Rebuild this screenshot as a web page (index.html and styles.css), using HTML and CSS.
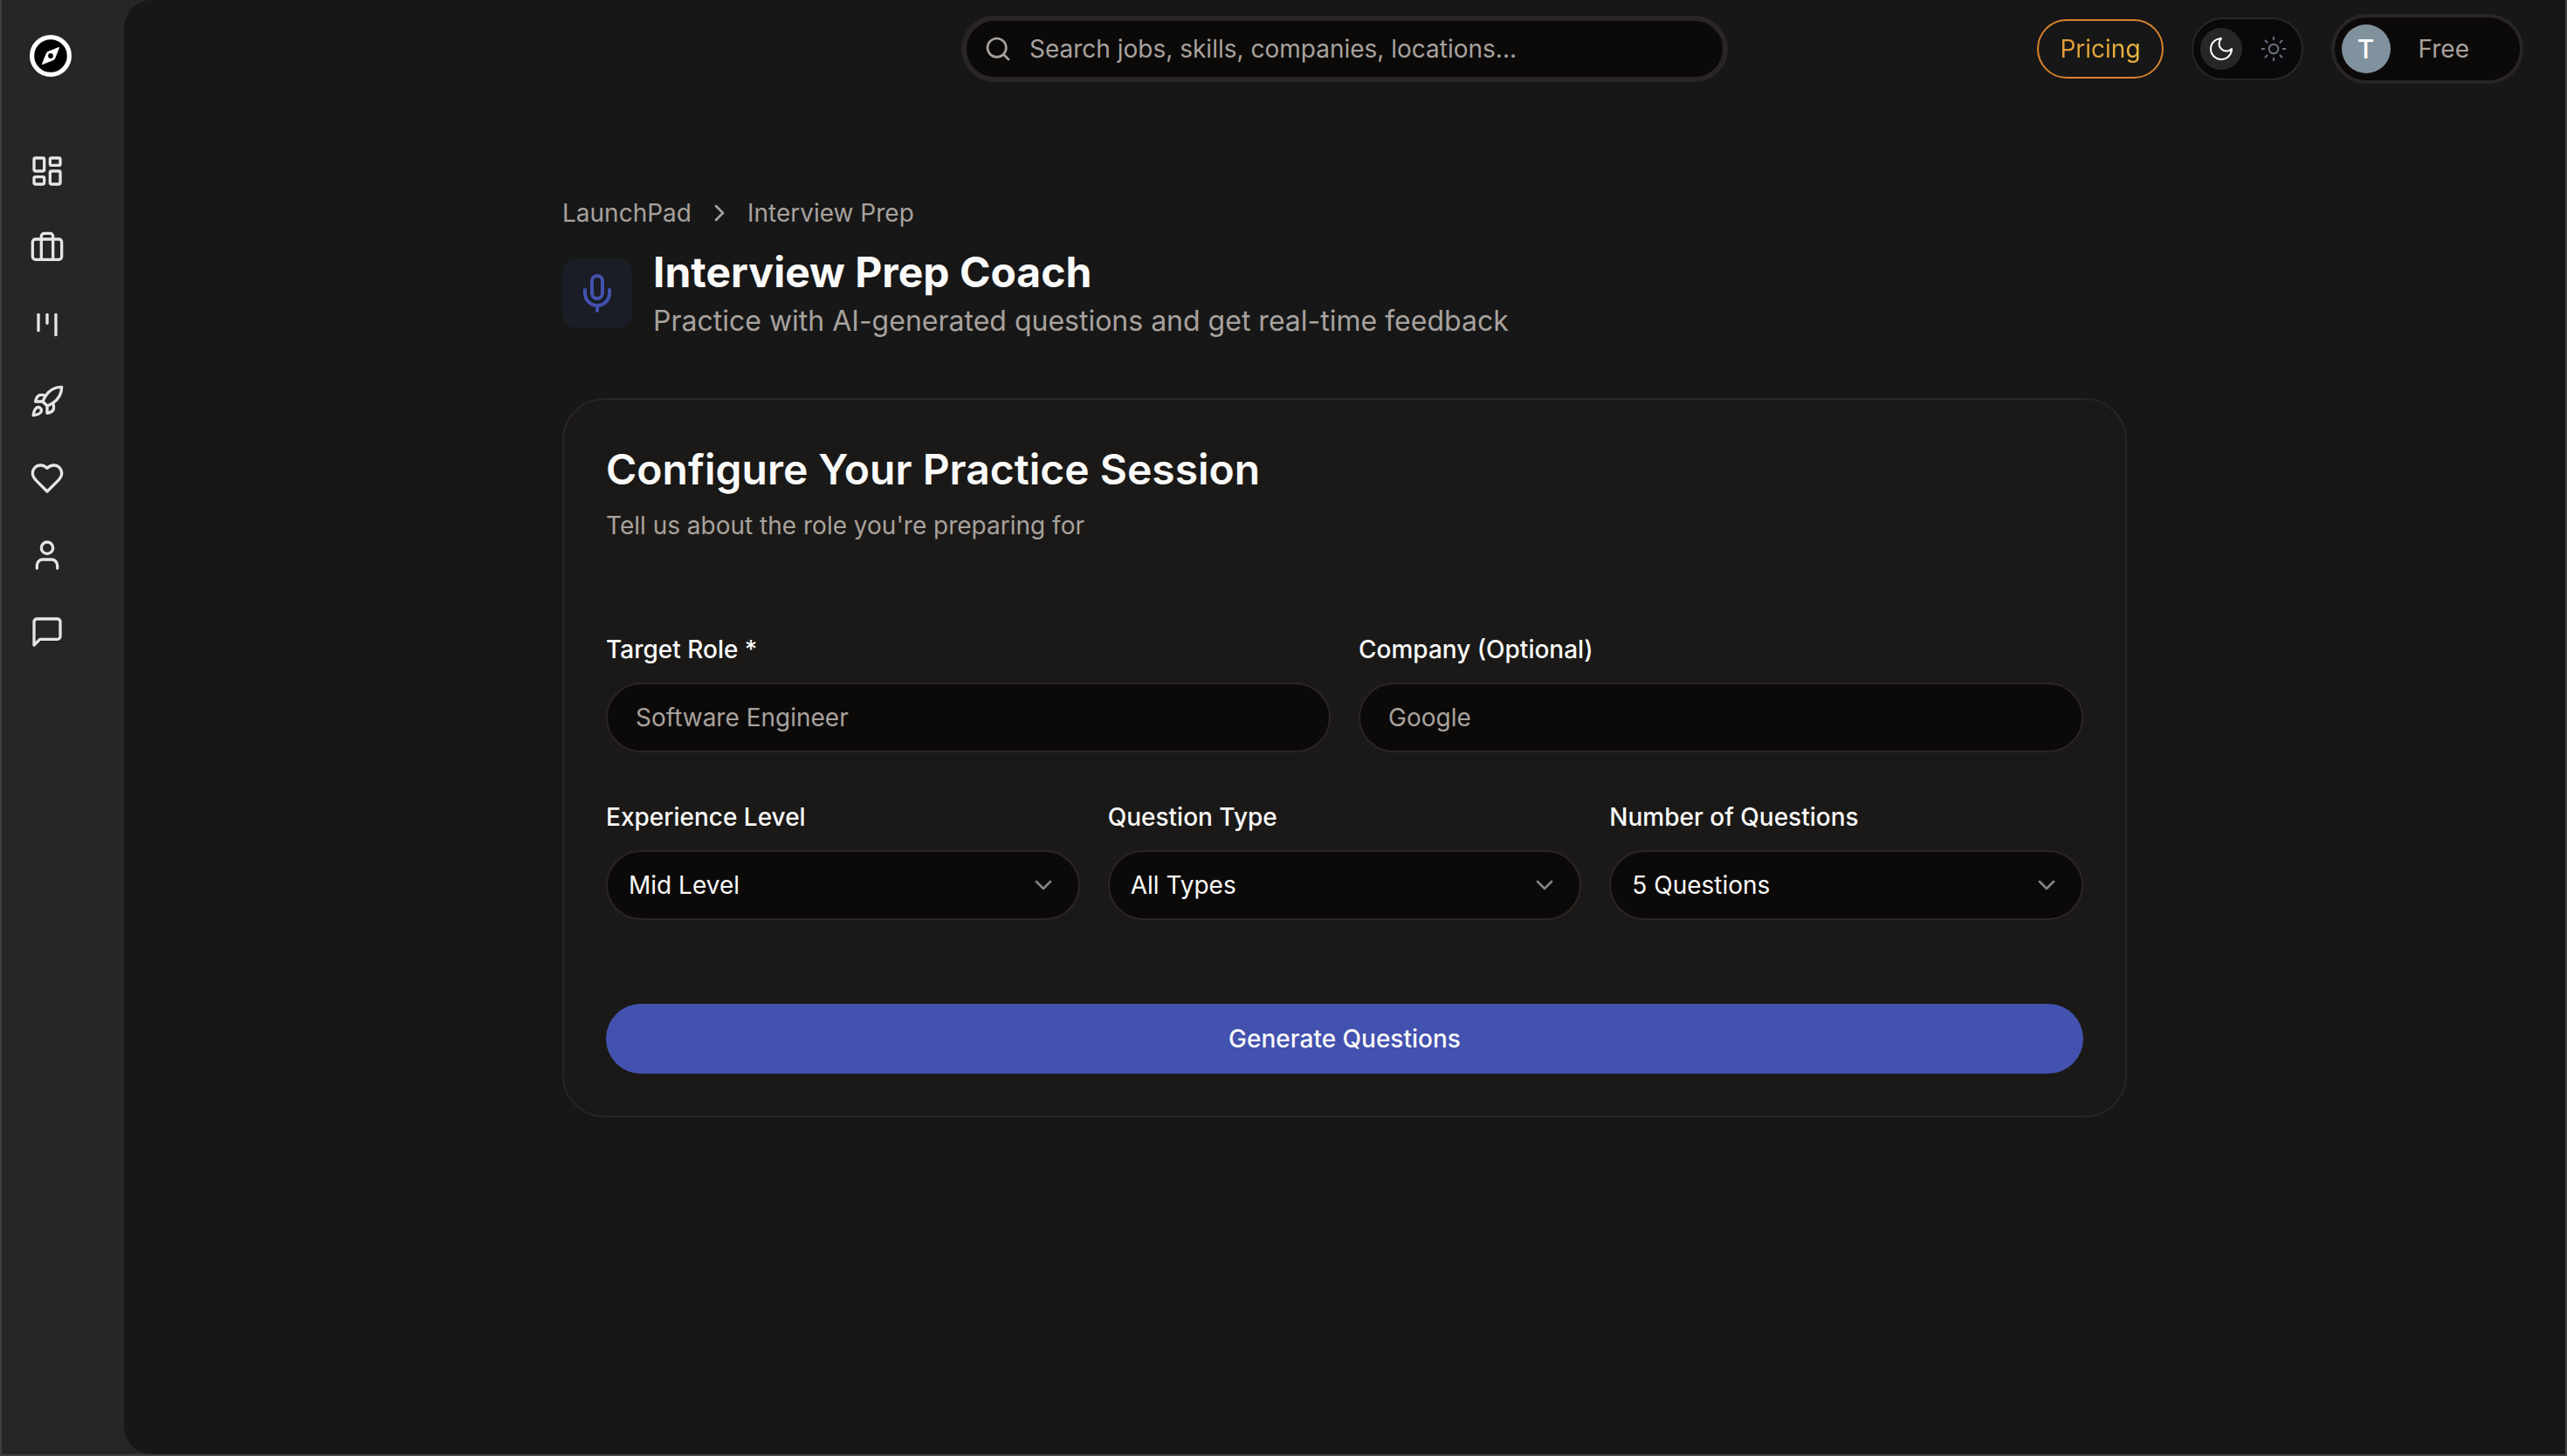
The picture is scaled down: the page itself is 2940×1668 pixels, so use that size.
FILE: index.html
```html
<!DOCTYPE html>
<html lang="en">
<head>
<meta charset="utf-8">
<meta name="viewport" content="width=device-width, initial-scale=1">
<title>Interview Prep Coach</title>
<link rel="stylesheet" href="styles.css">
</head>
<body>
<div class="app">
  <nav class="sidebar" aria-label="Main">
    <a class="logo" href="#" aria-label="Home">
      <svg viewBox="0 0 48 48"><circle cx="24" cy="24" r="21.4" fill="#000" stroke="#fff" stroke-width="5.2"/><path d="M33.6 14.4 28.6 27a3 3 0 0 1-1.6 1.6L14.4 33.6 19.4 21a3 3 0 0 1 1.6-1.6Z" fill="#fff" stroke="#fff" stroke-linejoin="round"/><circle cx="24" cy="24" r="2.9" fill="#000"/></svg>
    </a>
    <ul class="nav-list">
      <li><a href="#" aria-label="Dashboard"><svg class="icon" viewBox="0 0 24 24"><rect width="7" height="9" x="3" y="3" rx="1"/><rect width="7" height="5" x="14" y="3" rx="1"/><rect width="7" height="9" x="14" y="12" rx="1"/><rect width="7" height="5" x="3" y="16" rx="1"/></svg></a></li>
      <li><a href="#" aria-label="Jobs"><svg class="icon" viewBox="0 0 24 24"><path d="M16 20V4a2 2 0 0 0-2-2h-4a2 2 0 0 0-2 2v16"/><rect width="20" height="14" x="2" y="6" rx="2"/></svg></a></li>
      <li><a href="#" aria-label="Tracker"><svg class="icon" viewBox="0 0 24 24"><path d="M6 5v11"/><path d="M12 5v6"/><path d="M18 5v14"/></svg></a></li>
      <li><a href="#" aria-label="LaunchPad"><svg class="icon" viewBox="0 0 24 24"><path d="M4.5 16.5c-1.5 1.26-2 5-2 5s3.74-.5 5-2c.71-.84.7-2.13-.09-2.91a2.18 2.18 0 0 0-2.91-.09z"/><path d="m12 15-3-3a22 22 0 0 1 2-3.95A12.88 12.88 0 0 1 22 2c0 2.72-.78 7.5-6 11a22.35 22.35 0 0 1-4 2z"/><path d="M9 12H4s.55-3.03 2-4c1.62-1.08 5 0 5 0"/><path d="M12 15v5s3.03-.55 4-2c1.08-1.62 0-5 0-5"/></svg></a></li>
      <li><a href="#" aria-label="Favorites"><svg class="icon" viewBox="0 0 24 24"><path d="M19 14c1.49-1.46 3-3.21 3-5.5A5.5 5.5 0 0 0 16.5 3c-1.76 0-3 .5-4.5 2-1.5-1.5-2.74-2-4.5-2A5.5 5.5 0 0 0 2 8.5c0 2.3 1.5 4.05 3 5.5l7 7Z"/></svg></a></li>
      <li><a href="#" aria-label="Profile"><svg class="icon" viewBox="0 0 24 24"><path d="M19 21v-2a4 4 0 0 0-4-4H9a4 4 0 0 0-4 4v2"/><circle cx="12" cy="7" r="4"/></svg></a></li>
      <li><a href="#" aria-label="Messages"><svg class="icon" viewBox="0 0 24 24"><path d="M21 15a2 2 0 0 1-2 2H7l-4 4V5a2 2 0 0 1 2-2h14a2 2 0 0 1 2 2z"/></svg></a></li>
    </ul>
  </nav>

  <div class="main">
    <header class="topbar">
      <label class="search">
        <svg class="icon icon-sm" viewBox="0 0 24 24" aria-hidden="true"><circle cx="11" cy="11" r="8"/><path d="m21 21-4.3-4.3"/></svg>
        <input type="search" aria-label="Search" placeholder="Search jobs, skills, companies, locations...">
      </label>
      <div class="actions">
        <a class="pricing" href="#"><span>Pricing</span></a>
        <button class="theme" type="button" aria-label="Toggle theme">
          <span class="theme-option theme-active"><svg class="icon icon-sm" viewBox="0 0 24 24"><path d="M12 3a6 6 0 0 0 9 9 9 9 0 1 1-9-9Z"/></svg></span>
          <span class="theme-option"><svg class="icon icon-sm" viewBox="0 0 24 24"><circle cx="12" cy="12" r="4"/><path d="M12 2v2M12 20v2m-7.07-17.07 1.41 1.41M17.66 17.66l1.41 1.41M2 12h2M20 12h2M6.34 17.66l-1.41 1.41M19.07 4.93l-1.41 1.41"/></svg></span>
        </button>
        <button class="account" type="button"><span class="avatar">T</span><span class="plan">Free</span></button>
      </div>
    </header>

    <main class="content">
      <nav class="breadcrumb" aria-label="Breadcrumb">
        <a href="#">LaunchPad</a>
        <svg class="icon icon-sm" viewBox="0 0 24 24" aria-hidden="true"><path d="m9 18 6-6-6-6"/></svg>
        <span>Interview Prep</span>
      </nav>
      <div class="page-head">
        <div class="page-icon"><svg class="icon" viewBox="0 0 24 24"><path d="M12 19v3"/><path d="M19 10v2a7 7 0 0 1-14 0v-2"/><rect x="9" y="2" width="6" height="13" rx="3"/></svg></div>
        <div>
          <h1>Interview Prep Coach</h1>
          <p>Practice with AI-generated questions and get real-time feedback</p>
        </div>
      </div>

      <form class="card">
        <div class="card-head">
          <h2>Configure Your Practice Session</h2>
          <p>Tell us about the role you're preparing for</p>
        </div>
        <div class="fields">
          <div class="row row-2">
            <div class="field">
              <label for="role">Target Role *</label>
              <input class="control" id="role" type="text" placeholder="Software Engineer">
            </div>
            <div class="field">
              <label for="company">Company (Optional)</label>
              <input class="control" id="company" type="text" placeholder="Google">
            </div>
          </div>
          <div class="row row-3">
            <div class="field">
              <label for="level">Experience Level</label>
              <div class="select">
                <select class="control" id="level"><option>Mid Level</option></select>
                <svg class="icon icon-sm" viewBox="0 0 24 24" aria-hidden="true"><path d="m6 9 6 6 6-6"/></svg>
              </div>
            </div>
            <div class="field">
              <label for="type">Question Type</label>
              <div class="select">
                <select class="control" id="type"><option>All Types</option></select>
                <svg class="icon icon-sm" viewBox="0 0 24 24" aria-hidden="true"><path d="m6 9 6 6 6-6"/></svg>
              </div>
            </div>
            <div class="field">
              <label for="count">Number of Questions</label>
              <div class="select">
                <select class="control" id="count"><option>5 Questions</option></select>
                <svg class="icon icon-sm" viewBox="0 0 24 24" aria-hidden="true"><path d="m6 9 6 6 6-6"/></svg>
              </div>
            </div>
          </div>
        </div>
        <button class="submit" type="submit">Generate Questions</button>
      </form>
    </main>
  </div>
</div>
</body>
</html>
```
FILE: styles.css
```css
* { box-sizing: border-box; }

body {
  margin: 0;
  background: #262626;
  color: #fafaf9;
  font: 400 28px/40px Inter, "Liberation Sans", sans-serif;
}

h1, h2, p, ul { margin: 0; padding: 0; }
h1, h2 { font-size: 48px; line-height: 64px; }
a { color: inherit; text-decoration: none; }
input, select, button { font: inherit; color: inherit; }

.icon {
  display: block;
  flex: none;
  width: 40px;
  height: 40px;
  fill: none;
  stroke: currentColor;
  stroke-width: 2;
  stroke-linecap: round;
  stroke-linejoin: round;
}
.icon-sm { width: 32px; height: 32px; }

.app {
  display: flex;
  min-height: 100vh;
  border: 2px solid #404040;
  border-top: 0;
}

/* Sidebar */
.sidebar {
  flex: none;
  width: 140px;
  padding: 40px 32px;
}
.logo { display: block; width: 48px; }
.logo svg { display: block; width: 48px; height: 48px; }
.nav-list {
  display: grid;
  gap: 48px;
  margin-top: 88px;
  list-style: none;
  color: #e5e5e5;
}
.nav-list a { display: block; width: 40px; }

/* Main panel */
.main {
  flex: 1;
  background: #171717;
  border-radius: 32px 0 0 32px;
}
.topbar {
  display: grid;
  grid-template-columns: 1fr 878px 1fr;
  align-items: center;
  padding: 16px 48px;
}
.search {
  grid-column: 2;
  display: flex;
  align-items: center;
  gap: 20px;
  height: 76px;
  padding: 0 20px;
  border: 6px solid #292524;
  border-radius: 38px;
  background: #0c0a09;
  color: #a8a29e;
}
.search input {
  flex: 1;
  min-width: 0;
  padding: 0;
  border: 0;
  outline: 0;
  background: none;
}
::placeholder { color: #a8a29e; opacity: 1; }

.actions {
  display: flex;
  justify-content: flex-end;
  align-items: center;
  gap: 32px;
}
.pricing {
  padding: 12px 24px;
  border: 2px solid #d9822b;
  border-radius: 34px;
}
.pricing span {
  background: linear-gradient(to right, #e09a35, #e8b840);
  background-clip: text;
  color: transparent;
}
.theme {
  display: flex;
  align-items: center;
  gap: 12px;
  height: 72px;
  padding: 0 8px;
  border: 2px solid #27272a;
  border-radius: 36px;
  background: #09090b;
  color: #6b7280;
}
.theme-option {
  display: grid;
  place-items: center;
  width: 48px;
  height: 48px;
  border-radius: 50%;
}
.theme-option .icon { stroke-width: 1.5; }
.theme-active { background: #27272a; color: #fff; }
.account {
  display: flex;
  align-items: center;
  gap: 32px;
  height: 80px;
  padding: 0 58px 0 8px;
  border: 4px solid #292524;
  border-radius: 40px;
  background: #0c0a09;
  color: #a8a29e;
}
.avatar {
  display: grid;
  place-items: center;
  width: 56px;
  height: 56px;
  border-radius: 50%;
  background: #80929d;
  color: #fff;
  font-size: 30px;
  font-weight: 500;
}

/* Page content */
.content {
  max-width: 1792px;
  margin: 112px auto 64px;
}
.breadcrumb {
  display: flex;
  align-items: center;
  gap: 16px;
  color: #a8a29e;
}
.page-head {
  display: flex;
  align-items: center;
  gap: 24px;
  margin: 16px 0 64px;
}
.page-icon {
  padding: 16px;
  border-radius: 16px;
  background: #1a1d26;
  color: #4351af;
}
.page-icon .icon { width: 48px; height: 48px; }
.page-head p {
  color: #a8a29e;
  font-size: 32px;
  line-height: 48px;
}

.card {
  padding: 48px;
  border: 2px solid #292524;
  border-radius: 48px;
  background: #1b1917;
}
.card-head {
  display: grid;
  gap: 12px;
  margin-bottom: 102px;
}
.card-head h2 { font-weight: 600; }
.card-head p { color: #a8a29e; }
.fields { display: grid; gap: 54px; }
.row { display: grid; gap: 32px; }
.row-2 { grid-template-columns: repeat(2, 1fr); }
.row-3 { grid-template-columns: repeat(3, 1fr); }
.field { display: grid; gap: 18px; }
.field label { font-weight: 500; }
.control {
  display: block;
  width: 100%;
  height: 80px;
  padding: 0 32px;
  border: 2px solid #292524;
  border-radius: 40px;
  background: #0c0a09;
  appearance: none;
}
.select { display: grid; align-items: center; }
.select > * { grid-area: 1 / 1; }
.select .control { padding: 0 24px; }
.select .icon {
  justify-self: end;
  margin-right: 26px;
  opacity: 0.5;
  pointer-events: none;
}
.submit {
  display: block;
  width: 100%;
  height: 80px;
  margin-top: 96px;
  border: 0;
  border-radius: 40px;
  background: #4351af;
  color: #fafaf9;
  font-weight: 500;
}
```
